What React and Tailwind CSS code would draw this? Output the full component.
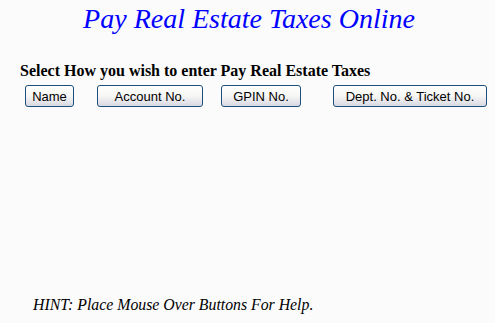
const buttons = [
  { label: "Name", ml: "ml-[25px]", w: "w-[49px]" },
  { label: "Account No.", ml: "ml-[23px]", w: "w-[106px]" },
  { label: "GPIN No.", ml: "ml-[18px]", w: "w-[80px]" },
  { label: "Dept. No. & Ticket No.", ml: "ml-[32px]", w: "w-[154px]" },
];

function XpButton({ label, className }) {
  return (
    <button
      className={`h-[22px] rounded-[3px] border border-[#1c4f7c] bg-gradient-to-b from-white via-[#f6f6f4] to-[#d8d8e4] text-[13px] leading-none text-black font-['Liberation_Sans',Arial,sans-serif] ${className}`}
    >
      {label}
    </button>
  );
}

export default function App() {
  return (
    <div className="w-[495px] h-[323px] bg-[#fbfbfb] font-['Liberation_Serif','Times_New_Roman',serif] flex flex-col">
      <h1 className="text-center italic text-[28px] leading-none text-[#0000ff] pt-[5px] pl-[3px]">
        Pay Real Estate Taxes Online
      </h1>
      <p className="mt-[30px] ml-[20px] font-bold text-[16px] leading-none text-black">
        Select How you wish to enter Pay Real Estate Taxes
      </p>
      <div className="flex mt-[6px]">
        {buttons.map((b) => (
          <XpButton key={b.label} label={b.label} className={`${b.ml} ${b.w}`} />
        ))}
      </div>
      <p className="mt-auto mb-[10px] ml-[33px] italic text-[15.8px] leading-none text-black">
        HINT: Place Mouse Over Buttons For Help.
      </p>
    </div>
  );
}
